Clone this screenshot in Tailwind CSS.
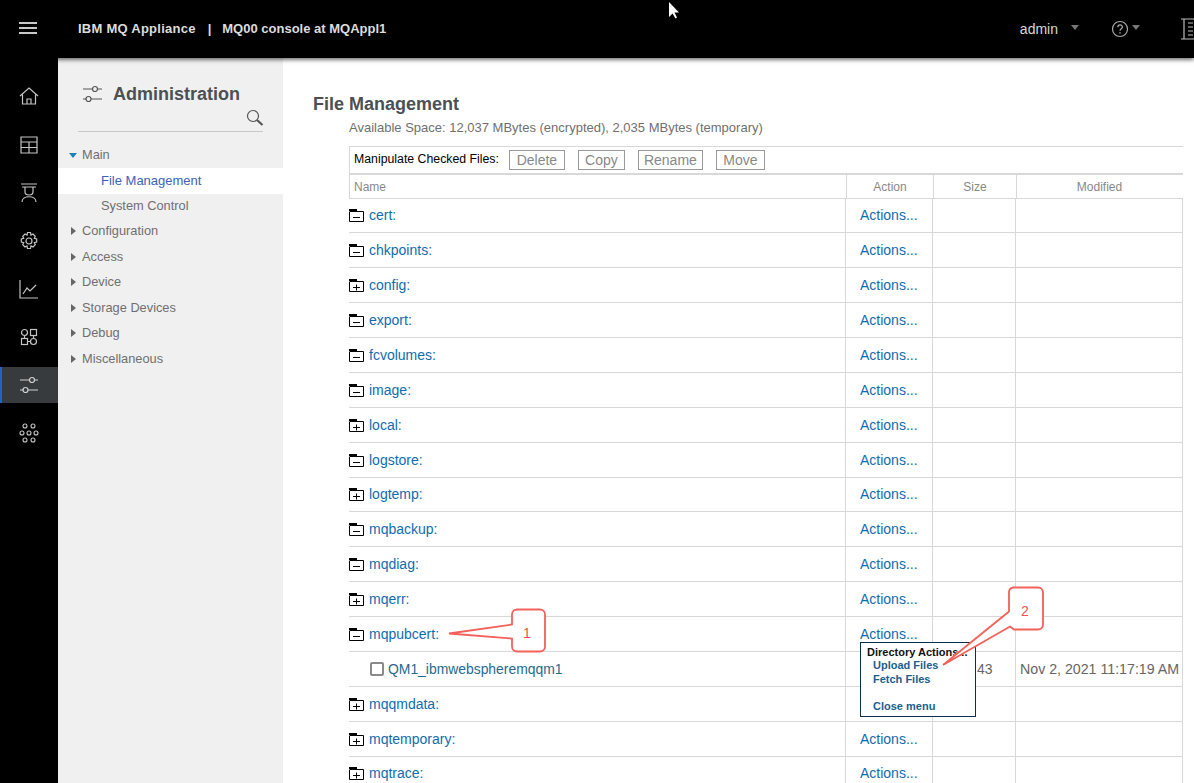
<!DOCTYPE html>
<html lang="en">
<head>
<meta charset="UTF-8">
<title>File Management</title>
<script src="https://cdn.jsdelivr.net/npm/@tailwindcss/browser@4"></script>
</head>
<body class="relative flex flex-col w-[1194px] h-[783px] overflow-hidden bg-white font-['Liberation_Sans',Arial,sans-serif]">
  <!-- Top bar -->
  <header class="relative z-10 flex items-center h-[58px] shrink-0 bg-black shadow-[0_2px_4px_rgba(0,0,0,0.55)]">
    <div class="flex flex-col gap-[3px] w-[18px] ml-[19px] mr-[41px] mb-[2px]">
      <span class="h-[2px] bg-[#c8c8c8]"></span><span class="h-[2px] bg-[#c8c8c8]"></span><span class="h-[2px] bg-[#c8c8c8]"></span>
    </div>
    <span class="text-[13px] font-bold text-[#dcdcdc] tracking-[0.25px]">IBM MQ Appliance</span>
    <span class="text-[13px] font-bold text-[#dcdcdc] ml-[12px]">|</span>
    <span class="text-[13px] font-bold text-[#dcdcdc] ml-[11px]">MQ00 console at MQAppl1</span>
    <span class="ml-auto text-[14px] text-[#d8d8d8]">admin</span>
    <span class="ml-[13px] mb-[4px] border-x-[4.5px] border-t-[5px] border-x-transparent border-t-[#777]"></span>
    <svg class="ml-[32px]" width="18" height="18" viewBox="0 0 18 18" fill="none" stroke="#aaa" stroke-width="1.2">
      <circle cx="9" cy="9" r="7.5"/>
      <path d="M6.8 7.2c0-3 4.6-3 4.6-.2 0 1.800-2.400 1.800-2.400 3.700M9 12v1.400"/>
    </svg>
    <span class="ml-[3px] mb-[4px] border-x-[4.5px] border-t-[5px] border-x-transparent border-t-[#777]"></span>
    <svg class="ml-[41px] mr-[-5px]" width="18" height="22" viewBox="0 0 18 22" fill="none" stroke="#bbb" stroke-width="1.2">
      <path d="M0 1h14M0 21h14M3 1v20M7 5h5M7 9h5M7 13h5M7 17h5"/>
    </svg>
  </header>

  <div class="flex flex-1 min-h-0">
    <!-- Icon rail -->
    <nav class="w-[58px] shrink-0 bg-black flex flex-col items-stretch pt-[15px]">
      <div class="h-[48px] flex items-center justify-center pb-[2px]">
        <svg width="20" height="20" viewBox="0 0 20 20" fill="none" stroke="#c4c4c4" stroke-width="1.2"><path d="M1 10l9-8 9 8M3.500 8.500V18h13V8.500M8 18v-5h4v5"/></svg>
      </div>
      <div class="h-[48px] flex items-center justify-center">
        <svg width="18" height="18" viewBox="0 0 18 18" fill="none" stroke="#c4c4c4" stroke-width="1.2"><path d="M1 1h16v16H1zM1 6h16M1 11.500h16M9 6v11"/></svg>
      </div>
      <div class="h-[48px] flex items-center justify-center">
        <svg width="16" height="20" viewBox="0 0 16 20" fill="none" stroke="#c4c4c4" stroke-width="1.2"><path d="M0 1h16M1 4h14M4 4v5c0 4 8 4 8 0V4M1 19c0-7 14-7 14 0"/></svg>
      </div>
      <div class="h-[48px] flex items-center justify-center">
        <svg width="20" height="20" viewBox="0 0 20 20" fill="none" stroke="#c4c4c4" stroke-width="1.2"><circle cx="10" cy="10" r="3"/><path d="M8.500 1.500h3l.5 2.500 2-1 2.300 2.300-1 2 2.400.7v3l-2.400.7 1 2-2.300 2.300-2-1-.5 2.500h-3l-.5-2.500-2 1-2.300-2.300 1-2-2.400-.7v-3l2.400-.7-1-2L6 3l2 1z"/></svg>
      </div>
      <div class="h-[48px] flex items-center justify-center">
        <svg width="20" height="20" viewBox="0 0 20 20" fill="none" stroke="#c4c4c4" stroke-width="1.2"><path d="M1 1v18h18M4 15l4-6 3 3 6-6"/></svg>
      </div>
      <div class="h-[48px] flex items-center justify-center">
        <svg width="18" height="18" viewBox="0 0 18 18" fill="none" stroke="#c4c4c4" stroke-width="1.2"><circle cx="4.500" cy="4.500" r="3"/><rect x="10.500" y="1.500" width="6" height="6"/><rect x="1.500" y="10.500" width="6" height="6"/><circle cx="13.500" cy="13.500" r="3"/><path d="M4.500 7.500v3M13.500 7.500v3M7.500 13.500h3"/></svg>
      </div>
      <div class="h-[36px] mt-[6px] mb-[6px] flex items-center justify-center bg-[#383b3e] border-l-[2px] border-[#1f62d0] pr-[2px]">
        <svg width="20" height="18" viewBox="0 0 20 18" fill="none" stroke="#d0d0d0" stroke-width="1.2"><path d="M1 4h10M15.500 4H19M1 14h3.500M9 14h10"/><circle cx="13" cy="4" r="2.500"/><circle cx="6.500" cy="14" r="2.500"/></svg>
      </div>
      <div class="h-[48px] flex items-center justify-center">
        <svg width="20" height="20" viewBox="0 0 20 20" fill="none" stroke="#c4c4c4" stroke-width="1.100"><circle cx="6" cy="3" r="2"/><circle cx="14" cy="3" r="2"/><circle cx="3" cy="10" r="2"/><circle cx="10" cy="10" r="2"/><circle cx="17" cy="10" r="2"/><circle cx="6" cy="17" r="2"/><circle cx="14" cy="17" r="2"/></svg>
      </div>
    </nav>

    <!-- Administration sidebar -->
    <aside class="w-[225px] shrink-0 bg-[#f0f0f0] text-[12.800px] text-[#6f6f6f]">
      <div class="flex items-center gap-[10px] pl-[24px] pt-[25px]">
        <svg width="21" height="18" viewBox="0 0 21 18" fill="none" stroke="#555" stroke-width="1.200"><path d="M1 4h10M15.500 4H20M1 14h3.500M9 14h11"/><circle cx="13" cy="4" r="2.500"/><circle cx="6.500" cy="14" r="2.500"/></svg>
        <h2 class="text-[18px] font-bold text-[#4b5054] leading-[22px]">Administration</h2>
      </div>
      <div class="flex justify-end pb-[4px] mt-[4px] border-b border-[#c8c8c8] w-[185px] ml-[20px]">
        <svg class="mr-[-1px]" width="18" height="18" viewBox="0 0 18 18" fill="none" stroke="#555" stroke-width="1.200"><circle cx="7" cy="7" r="5.500"/><path d="M11 11l5.500 5" stroke-width="2.200"/></svg>
      </div>
      <ul class="mt-[10px]">
        <li class="flex items-center h-[26px] pl-[11px]"><span class="border-x-[4px] border-t-[5px] border-x-transparent border-t-[#1f7fb8] mr-[5px]"></span>Main</li>
        <li class="flex items-center h-[25.500px] pl-[43px] bg-white text-[#3b62b5] text-[13px]">File Management</li>
        <li class="flex items-center h-[25px] pl-[43px] pb-[1px]">System Control</li>
        <li class="flex items-center h-[26px] pl-[13px] pb-[1px]"><span class="border-y-[4px] border-l-[5px] border-y-transparent border-l-[#666] mr-[6px]"></span>Configuration</li>
        <li class="flex items-center h-[25px] pl-[13px] pb-[1px]"><span class="border-y-[4px] border-l-[5px] border-y-transparent border-l-[#666] mr-[6px]"></span>Access</li>
        <li class="flex items-center h-[26px] pl-[13px] pb-[1px]"><span class="border-y-[4px] border-l-[5px] border-y-transparent border-l-[#666] mr-[6px]"></span>Device</li>
        <li class="flex items-center h-[25px] pl-[13px] pb-[1px]"><span class="border-y-[4px] border-l-[5px] border-y-transparent border-l-[#666] mr-[6px]"></span>Storage Devices</li>
        <li class="flex items-center h-[26px] pl-[13px] pb-[1px]"><span class="border-y-[4px] border-l-[5px] border-y-transparent border-l-[#666] mr-[6px]"></span>Debug</li>
        <li class="flex items-center h-[25px] pl-[13px] pb-[1px]"><span class="border-y-[4px] border-l-[5px] border-y-transparent border-l-[#666] mr-[6px]"></span>Miscellaneous</li>
      </ul>
    </aside>

    <!-- File management -->
    <main class="flex-1 min-w-0 pl-[30px] pt-[35px]">
      <h1 class="text-[18px] font-bold text-[#4b5054] leading-[22px]">File Management</h1>
      <div class="pl-[36px] w-[870px]">
        <p class="text-[13px] text-[#6f6f6f] leading-[16px] mt-[5px]">Available Space: 12,037 MBytes (encrypted), 2,035 MBytes (temporary)</p>
        <div class="mt-[10px] flex items-center h-[29px] border-t border-l border-b-2 border-[#d8d8d8] pl-[4px] pb-[1px]">
          <span class="text-[12.300px] text-black mr-[10px] leading-none">Manipulate Checked Files:</span>
          <button class="h-[20px] w-[56px] border border-[#999] text-[14px] text-[#888] mr-[13px] leading-none">Delete</button>
          <button class="h-[20px] w-[47px] border border-[#999] text-[14px] text-[#888] mr-[13px] leading-none">Copy</button>
          <button class="h-[20px] w-[65px] border border-[#999] text-[14px] text-[#888] mr-[13px] leading-none">Rename</button>
          <button class="h-[20px] w-[49px] border border-[#999] text-[14px] text-[#888] leading-none">Move</button>
        </div>
        <div class="grid grid-cols-[497px_87px_83px_166px] items-stretch h-[23.500px] border-l border-b border-[#d8d8d8] text-[12px] text-[#888]">
          <div class="flex items-center pl-[4px] pt-[1px] border-r border-[#d8d8d8]">Name</div>
          <div class="flex items-center justify-center pt-[1px] border-r border-[#d8d8d8]">Action</div>
          <div class="flex items-center justify-center pt-[1px] border-r border-[#d8d8d8]">Size</div>
          <div class="flex items-center justify-center pt-[1px] pr-[1px]">Modified</div>
        </div>
        <div id="rows"></div>
      </div>
    </main>
  </div>

  <!-- Directory actions menu -->
  <div class="absolute left-[860px] top-[642px] w-[116px] h-[75px] z-20 bg-white border border-[#0c3047] pl-[6px] pt-[2px] text-[11px] font-bold leading-[14px] text-[#1b5f8c]">
    <div class="text-[#111] h-[13px]">Directory Actions...</div>
    <div class="pl-[6px]">Upload Files</div>
    <div class="pl-[6px]">Fetch Files</div>
    <div class="pl-[6px] mt-[13px]">Close menu</div>
  </div>

  <!-- Screenshot annotations and mouse pointer -->
  <svg class="absolute inset-0 z-30 pointer-events-none" width="1194" height="783" viewBox="0 0 1194 783">
    <path d="M516 609.500h24a5 5 0 0 1 5 5v32a5 5 0 0 1-5 5h-23a5 5 0 0 1-5-5v-8l-63-5 63-9v-10a5 5 0 0 1 5-5z" fill="#fff" stroke="#f4605a" stroke-width="1.800"/>
    <text x="527" y="638" text-anchor="middle" font-size="14" fill="#e8544e">1</text>
    <path d="M1013 587.500h25a5 5 0 0 1 5 5v32a5 5 0 0 1-5 5h-24l-4-3-67 38.500 66-53.500v-19a5 5 0 0 1 4-5z" fill="#fff" stroke="#f4605a" stroke-width="1.800"/>
    <text x="1025" y="616" text-anchor="middle" font-size="14" fill="#e8544e">2</text>
    <path d="M669 2v15l3.500-3.500 3 5 1.500-1-2.500-5h4.500z" fill="#fff"/>
  </svg>

  <script>
    // name, open/closed folder, or a file row
    const rows = [
      ['cert', '-'], ['chkpoints', '-'], ['config', '+'], ['export', '-'], ['fcvolumes', '-'],
      ['image', '-'], ['local', '+'], ['logstore', '-'], ['logtemp', '+'], ['mqbackup', '-'],
      ['mqdiag', '-'], ['mqerr', '+'], ['mqpubcert', '-'], ['QM1_ibmwebspheremqqm1', 'file'],
      ['mqqmdata', '+', true], ['mqtemporary', '+'], ['mqtrace', '+']
    ];

    function folderIcon(kind) {
      const bar = kind === '+' ? '<path d="M7.500 5.500v6"/>' : '';
      return `<svg class="mr-[5px] shrink-0" width="15" height="13" viewBox="0 0 15 13" fill="none" stroke="#000">
        <path d="M.5 3v9.500h14v-10H.5"/><path d="M0 1h8" stroke-width="2"/><path d="M4 8.500h7"/>${bar}</svg>`;
    }

    const cellBorder = 'flex items-center border-r border-[#d8d8d8] pt-[1px]';
    document.getElementById('rows').innerHTML = rows.map(([name, kind, menuOver]) => {
      if (kind === 'file') {
        return `<div class="grid grid-cols-[497px_87px_83px_167px] h-[34.875px] border-b border-[#d8d8d8] text-[14px]">
          <div class="${cellBorder} pl-[21px] text-[#1f6a8f] text-[13.900px]"><span class="w-[14px] h-[14px] mr-[4px] border-2 border-[#8a8a8a] rounded-[2px]"></span>${name}</div>
          <div class="${cellBorder}"></div>
          <div class="${cellBorder} pl-[44px] text-[#666]">43</div>
          <div class="${cellBorder} pl-[4px] text-[#666] text-[14.200px] whitespace-nowrap">Nov 2, 2021 11:17:19 AM</div>
        </div>`;
      }
      return `<div class="grid grid-cols-[497px_87px_83px_167px] h-[34.875px] border-b border-[#d8d8d8] text-[14px] text-[#0f6cb0]">
        <div class="${cellBorder}">${folderIcon(kind)}${name}:</div>
        <div class="${cellBorder} pl-[14px]">${menuOver ? '' : 'Actions...'}</div>
        <div class="${cellBorder}"></div>
        <div class="${cellBorder}"></div>
      </div>`;
    }).join('');
  </script>
</body>
</html>
